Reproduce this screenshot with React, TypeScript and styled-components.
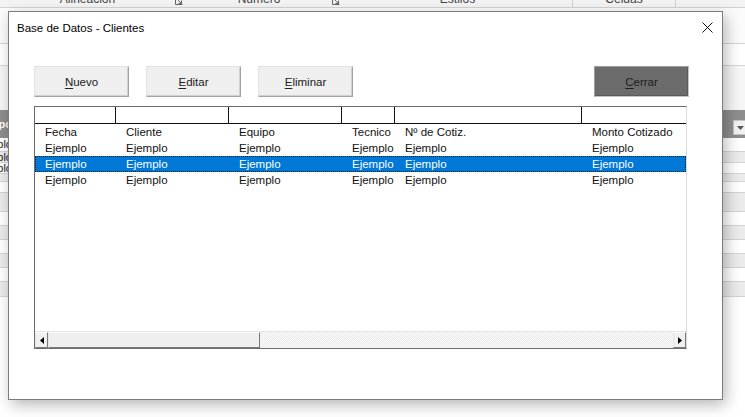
import styled, { createGlobalStyle } from "styled-components";

const GlobalStyle = createGlobalStyle`
  html, body {
    margin: 0;
    padding: 0;
    background: #ffffff;
  }
  body {
    font-family: "Liberation Sans", Arial, sans-serif;
  }
`;

const Desktop = styled.div`
  position: relative;
  width: 745px;
  height: 417px;
  overflow: hidden;
  background: #ffffff;
`;

/* ---------- excel sheet behind the form ---------- */

const Sheet = styled.div`
  display: flex;
  flex-direction: column;
  width: 100%;
`;

const Ribbon = styled.div`
  display: flex;
  height: 7px;
  overflow: hidden;
  background: #f3f3f3;
  border-bottom: 1px solid #d2d2d2;
`;

const RibbonGroup = styled.div<{ $w: number; $sep?: boolean }>`
  flex: 0 0 ${(p) => p.$w}px;
  display: flex;
  align-items: flex-start;
  box-sizing: border-box;
  border-right: 1px solid ${(p) => (p.$sep ? "#d0d0d0" : "transparent")};
`;

const RibbonLabel = styled.span`
  flex: 1;
  margin-top: -7px;
  text-align: center;
  font-family: "Segoe UI", "Liberation Sans", sans-serif;
  font-size: 12px;
  line-height: 13px;
  color: #444444;
`;

const Launcher = styled.svg`
  flex: 0 0 8px;
  margin-top: -3px;
  margin-right: 2px;
`;

const Bar = styled.div<{ $h: number; $bg: string; $line?: boolean }>`
  height: ${(p) => p.$h}px;
  background: ${(p) => p.$bg};
  border-bottom: ${(p) => (p.$line ? "1px solid #d4d4d4" : "none")};
`;

const HeaderBand = styled.div`
  height: 28px;
  display: flex;
  justify-content: space-between;
  align-items: center;
  background: #8e8e8e;
`;

const SheetRow = styled.div<{ $h: number; $shade: boolean }>`
  height: ${(p) => p.$h}px;
  display: flex;
  align-items: center;
  overflow: hidden;
  background: ${(p) => (p.$shade ? "#ebebeb" : "#ffffff")};
  border-bottom: 1px solid #d4d4d4;
`;

const EdgeCell = styled.div<{ $bold?: boolean }>`
  width: 12px;
  display: flex;
  justify-content: flex-end;
  overflow: hidden;
  white-space: nowrap;
  font-size: 11px;
  line-height: 11px;
  font-weight: ${(p) => (p.$bold ? 700 : 400)};
  color: ${(p) => (p.$bold ? "#ffffff" : "#222222")};
`;

const DropButton = styled.div`
  align-self: flex-end;
  margin-bottom: 3px;
  margin-right: -3px;
  width: 15px;
  height: 15px;
  box-sizing: border-box;
  display: flex;
  align-items: center;
  justify-content: center;
  background: #f2f2f2;
  border: 1px solid #c4c4c4;
`;

/* ---------- the user form ---------- */

const Window = styled.div`
  position: absolute;
  left: 8px;
  top: 11px;
  width: 715px;
  height: 389px;
  box-sizing: border-box;
  display: flex;
  flex-direction: column;
  background: #ffffff;
  border: 1px solid #7c7c7c;
  box-shadow: 3px 5px 14px rgba(0, 0, 0, 0.28);
`;

const TitleBar = styled.div`
  height: 31px;
  display: flex;
  align-items: center;
  justify-content: space-between;
  padding: 0 9px 0 8px;
  font-family: "Segoe UI", "Liberation Sans", sans-serif;
  font-size: 11.5px;
  color: #000000;
`;

const Body = styled.div`
  display: flex;
  flex-direction: column;
  padding: 23px 0 0 25px;
  font-family: "Century Gothic", "Liberation Sans", Arial, sans-serif;
  font-size: 11.5px;
`;

const ButtonRow = styled.div`
  width: 655px;
  height: 31px;
  display: flex;
  gap: 17px;
`;

const FormButton = styled.button<{ $dark?: boolean }>`
  width: 95px;
  height: 31px;
  padding: 0;
  box-sizing: border-box;
  margin-left: ${(p) => (p.$dark ? "auto" : "0")};
  background: ${(p) => (p.$dark ? "#6c6c6c" : "#efefef")};
  border: 1px solid;
  border-color: ${(p) =>
    p.$dark
      ? "#9c9c9c #c4c4c4 #c4c4c4 #9c9c9c"
      : "#e2e2e2 #a3a3a3 #a3a3a3 #e2e2e2"};
  box-shadow: ${(p) =>
    p.$dark ? "inset -1px -1px 0 #5a5a5a" : "inset -1px -1px 0 #d0d0d0"};
  font-family: inherit;
  font-size: 11.5px;
  color: ${(p) => (p.$dark ? "#1c1c1c" : "#222222")};

  u {
    text-underline-offset: 2px;
  }
`;

const columns = "81px 113px 113px 53px 187px 1fr";

const ListBox = styled.div`
  margin-top: 9px;
  width: 653px;
  height: 243px;
  box-sizing: border-box;
  display: flex;
  flex-direction: column;
  background: #ffffff;
  border: 1px solid;
  border-color: #6c6c6c #dadada #6c6c6c #6c6c6c;
`;

const ListHeader = styled.div`
  height: 17px;
  box-sizing: border-box;
  display: grid;
  grid-template-columns: ${columns};
  border-bottom: 1px solid #111111;
`;

const HeaderCell = styled.div`
  border-right: 1px solid #111111;

  &:last-child {
    border-right: none;
  }
`;

const ListRows = styled.div`
  flex: 1;
  display: flex;
  flex-direction: column;
`;

const ListRow = styled.div<{ $selected?: boolean }>`
  height: 16px;
  display: grid;
  grid-template-columns: ${columns};
  line-height: 16px;
  background: ${(p) => (p.$selected ? "#0078d7" : "transparent")};
  color: ${(p) => (p.$selected ? "#ffffff" : "#111111")};
  outline: ${(p) => (p.$selected ? "1px dotted #1a1a1a" : "none")};
  outline-offset: -1px;
`;

const Cell = styled.div`
  padding-left: 10px;
  overflow: hidden;
  white-space: nowrap;
`;

const ScrollBar = styled.div`
  height: 16px;
  display: flex;
  border-top: 1px solid #e4e4e4;
`;

const ScrollButton = styled.div`
  flex: 0 0 13px;
  box-sizing: border-box;
  display: flex;
  align-items: center;
  justify-content: center;
  background: #f0f0f0;
  border: 1px solid;
  border-color: #ffffff #7a7a7a #7a7a7a #e6e6e6;
`;

const Thumb = styled.div`
  flex: 0 0 212px;
  box-sizing: border-box;
  background: #efefef;
  border: 1px solid;
  border-color: #ffffff #7a7a7a #7a7a7a #e6e6e6;
`;

const Track = styled.div`
  flex: 1;
  background-color: #ffffff;
  background-image: repeating-conic-gradient(#e7e7e7 0% 25%, #ffffff 0% 50%);
  background-size: 2px 2px;
`;

const ribbonGroups = [
  { label: "Alineación", w: 186, launcher: true },
  { label: "Número", w: 157, launcher: true },
  { label: "Estilos", w: 230, sep: true },
  { label: "Celdas", w: 103, sep: true },
  { label: "", w: 69 },
];

const sheetRows = [
  { h: 14, text: true },
  { h: 11, text: true },
  { h: 11, text: true },
  { h: 8 },
  { h: 11 },
  { h: 19 },
  { h: 14 },
  { h: 14 },
  { h: 14 },
  { h: 14 },
  { h: 14 },
  { h: 15 },
];

const headers = [
  "Fecha",
  "Cliente",
  "Equipo",
  "Tecnico",
  "Nº de Cotiz.",
  "Monto Cotizado",
];

const records = [
  ["Ejemplo", "Ejemplo", "Ejemplo", "Ejemplo", "Ejemplo", "Ejemplo"],
  ["Ejemplo", "Ejemplo", "Ejemplo", "Ejemplo", "Ejemplo", "Ejemplo"],
  ["Ejemplo", "Ejemplo", "Ejemplo", "Ejemplo", "Ejemplo", "Ejemplo"],
];

const selectedIndex = 1;

const Arrow = ({ dir }: { dir: "left" | "right" }) => (
  <svg width="4" height="7" viewBox="0 0 4 7">
    {dir === "left" ? (
      <path d="M4 0 L0 3.5 L4 7 Z" fill="#000" />
    ) : (
      <path d="M0 0 L4 3.5 L0 7 Z" fill="#000" />
    )}
  </svg>
);

const App = () => {
  return (
    <Desktop>
      <GlobalStyle />

      <Sheet>
        <Ribbon>
          {ribbonGroups.map((g, i) => (
            <RibbonGroup key={i} $w={g.w} $sep={g.sep}>
              <RibbonLabel>{g.label}</RibbonLabel>
              {g.launcher && (
                <Launcher width="8" height="8" viewBox="0 0 8 8">
                  <path
                    d="M0.5 0.5 V7.5 H7.5 M3 3 L6.5 6.5 M6.5 3.5 V6.5 H3.5"
                    stroke="#666"
                    strokeWidth="1"
                    fill="none"
                  />
                </Launcher>
              )}
            </RibbonGroup>
          ))}
        </Ribbon>
        <Bar $h={35} $bg="#fbfbfb" $line />
        <Bar $h={21} $bg="#ffffff" $line />
        <Bar $h={44} $bg="#f6f6f6" />
        <HeaderBand>
          <EdgeCell $bold>Equipo</EdgeCell>
          <DropButton>
            <svg width="7" height="4" viewBox="0 0 7 4">
              <path d="M0 0 H7 L3.5 4 Z" fill="#555" />
            </svg>
          </DropButton>
        </HeaderBand>
        {sheetRows.map((r, i) => (
          <SheetRow key={i} $h={r.h - 1} $shade={i % 2 === 1}>
            {r.text && <EdgeCell>Ejemplo</EdgeCell>}
          </SheetRow>
        ))}
      </Sheet>

      <Window>
        <TitleBar>
          <span>Base de Datos - Clientes</span>
          <svg width="11" height="11" viewBox="0 0 11 11">
            <path d="M0.5 0.5 L10.5 10.5 M10.5 0.5 L0.5 10.5" stroke="#111" strokeWidth="1" />
          </svg>
        </TitleBar>

        <Body>
          <ButtonRow>
            <FormButton>
              <u>N</u>uevo
            </FormButton>
            <FormButton>
              <u>E</u>ditar
            </FormButton>
            <FormButton>
              <u>E</u>liminar
            </FormButton>
            <FormButton $dark>
              <u>C</u>errar
            </FormButton>
          </ButtonRow>

          <ListBox>
            <ListHeader>
              {headers.map((h) => (
                <HeaderCell key={h} />
              ))}
            </ListHeader>
            <ListRows>
              <ListRow>
                {headers.map((h) => (
                  <Cell key={h}>{h}</Cell>
                ))}
              </ListRow>
              {records.map((rec, i) => (
                <ListRow key={i} $selected={i === selectedIndex}>
                  {rec.map((v, j) => (
                    <Cell key={j}>{v}</Cell>
                  ))}
                </ListRow>
              ))}
            </ListRows>
            <ScrollBar>
              <ScrollButton>
                <Arrow dir="left" />
              </ScrollButton>
              <Thumb />
              <Track />
              <ScrollButton>
                <Arrow dir="right" />
              </ScrollButton>
            </ScrollBar>
          </ListBox>
        </Body>
      </Window>
    </Desktop>
  );
};

export default App;
